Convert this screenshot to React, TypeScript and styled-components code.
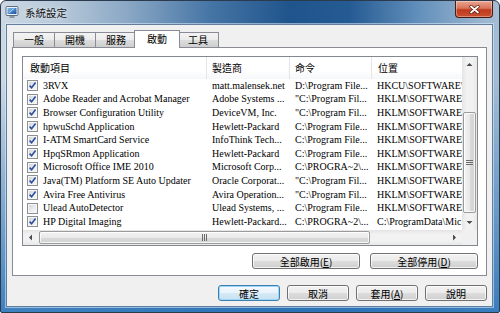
import React from "react";
import styled, { createGlobalStyle, css } from "styled-components";

const CJK = `"Noto Sans CJK TC", "Noto Sans CJK SC", sans-serif`;
const SERIF = `"Liberation Serif", "Noto Sans CJK TC", serif`;

const GlobalStyle = createGlobalStyle`
  * { box-sizing: border-box; }
  html, body { margin: 0; padding: 0; background: #fff; }
  body { width: 500px; height: 313px; overflow: hidden; font-family: ${SERIF}; }
`;

const Window = styled.div`
  width: 500px;
  height: 313px;
  display: flex;
  flex-direction: column;
  border: 1px solid #2b3b4d;
  border-radius: 6px 6px 2px 2px;
  overflow: hidden;
  background:
    linear-gradient(to bottom, rgba(46, 118, 186, 0) 0px, rgba(46, 118, 186, 0) 80px, rgba(46, 118, 186, 0.9) 313px),
    linear-gradient(to right, #ccd8e3 0%, #b6c8d9 12%, #88a6c4 26%, #4675a5 42%, #1f548c 58%, #255b93 70%, #6390bb 84%, #8faecb 94%, #a6bed5 100%);
`;

const TitleBar = styled.div`
  height: 23px;
  display: flex;
  align-items: flex-start;
  padding: 0 6px 0 4px;
`;

const AppIcon = styled.svg`
  margin-top: 4px;
  flex: none;
`;

const Title = styled.div`
  margin: 5px 0 0 6px;
  font: 10.5px/14px ${CJK};
  color: #111;
  text-shadow: 0 0 4px rgba(255, 255, 255, 0.9);
`;

const CloseButton = styled.div`
  margin-left: auto;
  width: 38px;
  height: 17px;
  display: flex;
  align-items: center;
  justify-content: center;
  border: 1px solid #4a1a10;
  border-top: none;
  border-radius: 0 0 4px 4px;
  background: linear-gradient(#e8a592 0%, #d87459 45%, #c13a1e 55%, #c9502f 100%);
  box-shadow: inset 0 0 0 1px rgba(255, 255, 255, 0.35);
`;

const Client = styled.div`
  flex: 1;
  margin: 0 6px 5px 5px;
  display: flex;
  flex-direction: column;
  padding: 5px;
  background: #f0f0f0;
  border: 1px solid #627e9c;
  box-shadow: 0 0 0 1px rgba(220, 240, 255, 0.55);
`;

const TabRow = styled.div`
  height: 17px;
  display: flex;
  align-items: flex-end;
  padding-left: 2px;
  position: relative;
  z-index: 1;
`;

const Tab = styled.div<{ $active?: boolean }>`
  height: 15px;
  padding: 0 10px;
  margin-left: -1px;
  border: 1px solid #898c95;
  border-bottom: none;
  background: linear-gradient(#f3f3f3 0%, #ebebeb 50%, #dddddd 50%, #cfcfcf 100%);
  font: 10px/14px ${CJK};
  color: #000;
  ${(p) =>
    p.$active &&
    css`
      height: 18px;
      margin: 0 -2px -1px -3px;
      padding: 1px 12px 0;
      background: #fff;
      position: relative;
      z-index: 2;
    `}
`;

const Panel = styled.div`
  height: 229px;
  display: flex;
  flex-direction: column;
  padding: 8px 8px 6px 9px;
  background: #fff;
  border: 1px solid #898c95;
`;

const ListBox = styled.div`
  height: 190px;
  display: grid;
  grid-template-columns: 1fr 15px;
  grid-template-rows: 1fr 15px;
  border: 1px solid #828790;
  background: #fff;
`;

const ListContent = styled.div`
  overflow: hidden;
`;

const COLS = "184px 83px 82px 140px";

const HeaderRow = styled.div`
  height: 22px;
  display: grid;
  grid-template-columns: ${COLS};
  background: linear-gradient(#ffffff 0%, #ffffff 60%, #f6f7f9 100%);
`;

const HeaderCell = styled.div<{ $pad?: number }>`
  display: flex;
  align-items: center;
  padding-left: ${(p) => p.$pad ?? 5}px;
  border-right: 1px solid #e3e5e8;
  font: 10px/12px ${CJK};
  color: #000;
  white-space: nowrap;
`;

const Row = styled.div`
  height: 13.6px;
  display: grid;
  grid-template-columns: ${COLS};
  align-items: center;
  font: 10px/12px ${SERIF};
  color: #000;
  white-space: nowrap;
`;

const Cell = styled.div`
  overflow: hidden;
  padding-left: 5px;
`;

const NameCell = styled.div`
  display: flex;
  align-items: center;
  gap: 5px;
  padding-left: 4px;
  overflow: hidden;
`;

const CheckBox = styled.span`
  flex: none;
  width: 11px;
  height: 11px;
  display: flex;
  align-items: center;
  justify-content: center;
  border: 1px solid #8e8f8f;
  background: linear-gradient(135deg, #cdd1d6 0%, #eceef0 60%, #f8f8f8 100%);
  box-shadow: inset 0 0 0 1px #f6f6f6;
`;

const VScroll = styled.div`
  display: flex;
  flex-direction: column;
  background: linear-gradient(to right, #e4e4e4 0%, #f2f2f2 30%, #f2f2f2 70%, #e8e8e8 100%);
`;

const HScroll = styled.div`
  display: flex;
  background: linear-gradient(#e4e4e4 0%, #f2f2f2 30%, #f2f2f2 70%, #e8e8e8 100%);
`;

const ArrowBox = styled.div`
  flex: none;
  width: 15px;
  height: 15px;
  display: flex;
  align-items: center;
  justify-content: center;
`;

const Track = styled.div<{ $vertical?: boolean; $offset: number }>`
  flex: 1;
  display: flex;
  flex-direction: ${(p) => (p.$vertical ? "column" : "row")};
  ${(p) => (p.$vertical ? `padding: ${p.$offset}px 1px 0;` : `padding: 1px 0 1px ${p.$offset}px;`)}
`;

const Thumb = styled.div<{ $vertical?: boolean; $size: number }>`
  ${(p) => (p.$vertical ? `height: ${p.$size}px;` : `width: ${p.$size}px;`)}
  display: flex;
  align-items: center;
  justify-content: center;
  border: 1px solid #9b9b9b;
  border-radius: 2px;
  background: ${(p) =>
    p.$vertical
      ? "linear-gradient(to right, #f4f4f4 0%, #e9e9e9 50%, #dadada 51%, #d2d2d2 100%)"
      : "linear-gradient(#f4f4f4 0%, #e9e9e9 50%, #dadada 51%, #d2d2d2 100%)"};
  box-shadow: inset 0 0 0 1px rgba(255, 255, 255, 0.8);
`;

const Corner = styled.div`
  background: #f0f0f0;
`;

const ActionRow = styled.div<{ $top: number; $gap: number }>`
  display: flex;
  justify-content: flex-end;
  gap: ${(p) => p.$gap}px;
  margin-top: ${(p) => p.$top}px;
`;

const Button = styled.button<{ $w: number; $default?: boolean }>`
  width: ${(p) => p.$w}px;
  height: 16px;
  padding: 0;
  border: 1px solid #707070;
  border-radius: 3px;
  background: linear-gradient(#f2f2f2 0%, #ebebeb 50%, #dddddd 50%, #cfcfcf 100%);
  box-shadow: inset 0 0 0 1px rgba(255, 255, 255, 0.75);
  font: 10px/13px ${CJK};
  color: #000;
  ${(p) =>
    p.$default &&
    css`
      border-color: #3c7fb1;
      background: linear-gradient(#f4f9fd 0%, #e8f3fb 50%, #d6eaf7 50%, #c7e1f3 100%);
      box-shadow: inset 0 0 0 1px #9fd8f5;
    `}
  u {
    text-decoration: underline;
  }
`;

type Item = [boolean, string, string, string, string];

const items: Item[] = [
  [true, "3RVX", "matt.malensek.net", "D:\\Program File...", "HKCU\\SOFTWARE\\"],
  [true, "Adobe Reader and Acrobat Manager", "Adobe Systems ...", "\"C:\\Program Fil...", "HKLM\\SOFTWARE\\"],
  [true, "Browser Configuration Utility", "DeviceVM, Inc.", "\"C:\\Program Fil...", "HKLM\\SOFTWARE\\"],
  [true, "hpwuSchd Application", "Hewlett-Packard", "C:\\Program File...", "HKLM\\SOFTWARE\\"],
  [true, "I-ATM SmartCard Service", "InfoThink Tech...", "C:\\Program File...", "HKLM\\SOFTWARE\\"],
  [true, "HpqSRmon Application", "Hewlett-Packard", "C:\\Program File...", "HKLM\\SOFTWARE\\"],
  [true, "Microsoft Office IME 2010", "Microsoft Corp...", "C:\\PROGRA~2\\...", "HKLM\\SOFTWARE\\"],
  [true, "Java(TM) Platform SE Auto Updater", "Oracle Corporat...", "\"C:\\Program Fil...", "HKLM\\SOFTWARE\\"],
  [true, "Avira Free Antivirus", "Avira Operation...", "\"C:\\Program Fil...", "HKLM\\SOFTWARE\\"],
  [false, "Ulead AutoDetector", "Ulead Systems, ...", "C:\\Program File...", "HKLM\\SOFTWARE\\"],
  [true, "HP Digital Imaging", "Hewlett-Packard...", "C:\\PROGRA~2\\...", "C:\\ProgramData\\Mic"],
];

const Arrow = ({ dir }: { dir: "up" | "down" | "left" | "right" }) => {
  const pts = {
    up: "0.5,4 3.5,1 6.5,4",
    down: "0.5,1 3.5,4 6.5,1",
    left: "4,0.5 1,3.5 4,6.5",
    right: "1,0.5 4,3.5 1,6.5",
  }[dir];
  const w = dir === "up" || dir === "down" ? 7 : 5;
  const h = dir === "up" || dir === "down" ? 5 : 7;
  return (
    <svg width={w} height={h} viewBox={`0 0 ${w} ${h}`}>
      <polygon points={pts} fill="#4a4a4a" />
    </svg>
  );
};

const Grip = ({ vertical }: { vertical?: boolean }) => (
  <svg width={vertical ? 7 : 5} height={vertical ? 5 : 7}>
    {[0, 2, 4].map((o) =>
      vertical ? (
        <line key={o} x1="0" x2="7" y1={o + 0.5} y2={o + 0.5} stroke="#6a6a6a" />
      ) : (
        <line key={o} y1="0" y2="7" x1={o + 0.5} x2={o + 0.5} stroke="#6a6a6a" />
      )
    )}
  </svg>
);

const App = () => {
  return (
    <>
      <GlobalStyle />
      <Window>
        <TitleBar>
          <AppIcon width="14" height="14" viewBox="0 0 14 14">
            <defs>
              <linearGradient id="scr" x1="0" y1="0" x2="1" y2="1">
                <stop offset="0" stopColor="#7cc0f4" />
                <stop offset="1" stopColor="#1b4f9f" />
              </linearGradient>
            </defs>
            <rect x="1" y="1.5" width="12" height="9" rx="1" fill="#eef2f6" stroke="#5c6f85" />
            <rect x="2.5" y="3" width="9" height="6" fill="url(#scr)" />
            <path d="M3.5 8 L9 3.5" stroke="#d8ecfb" strokeWidth="0.8" />
            <rect x="4.5" y="11" width="5" height="2" fill="#8a97a6" />
          </AppIcon>
          <Title>系統設定</Title>
          <CloseButton>
            <svg width="11" height="9" viewBox="0 0 11 9">
              <path d="M2 1.5 L9 7.5 M9 1.5 L2 7.5" stroke="#5a1a0e" strokeWidth="3.2" strokeLinecap="round" />
              <path d="M2 1.5 L9 7.5 M9 1.5 L2 7.5" stroke="#ffffff" strokeWidth="1.8" strokeLinecap="round" />
            </svg>
          </CloseButton>
        </TitleBar>
        <Client>
          <TabRow>
            <Tab>一般</Tab>
            <Tab>開機</Tab>
            <Tab>服務</Tab>
            <Tab $active>啟動</Tab>
            <Tab>工具</Tab>
          </TabRow>
          <Panel>
            <ListBox>
              <ListContent>
                <HeaderRow>
                  <HeaderCell $pad={7}>啟動項目</HeaderCell>
                  <HeaderCell>製造商</HeaderCell>
                  <HeaderCell>命令</HeaderCell>
                  <HeaderCell $pad={6}>位置</HeaderCell>
                </HeaderRow>
                {items.map(([on, name, maker, cmd, loc]) => (
                  <Row key={name}>
                    <NameCell>
                      <CheckBox>
                        {on && (
                          <svg width="9" height="9" viewBox="0 0 9 9">
                            <path d="M1.6 4.6 L3.6 6.8 L7.6 1.6" fill="none" stroke="#2d4f9e" strokeWidth="1.6" />
                          </svg>
                        )}
                      </CheckBox>
                      <span>{name}</span>
                    </NameCell>
                    <Cell>{maker}</Cell>
                    <Cell>{cmd}</Cell>
                    <Cell>{loc}</Cell>
                  </Row>
                ))}
              </ListContent>
              <VScroll>
                <ArrowBox>
                  <Arrow dir="up" />
                </ArrowBox>
                <Track $vertical $offset={40}>
                  <Thumb $vertical $size={101}>
                    <Grip vertical />
                  </Thumb>
                </Track>
                <ArrowBox>
                  <Arrow dir="down" />
                </ArrowBox>
              </VScroll>
              <HScroll>
                <ArrowBox>
                  <Arrow dir="left" />
                </ArrowBox>
                <Track $offset={1}>
                  <Thumb $size={331}>
                    <Grip />
                  </Thumb>
                </Track>
                <ArrowBox>
                  <Arrow dir="right" />
                </ArrowBox>
              </HScroll>
              <Corner />
            </ListBox>
            <ActionRow $top={7} $gap={10}>
              <Button $w={108}>
                全部啟用(<u>E</u>)
              </Button>
              <Button $w={108}>
                全部停用(<u>D</u>)
              </Button>
            </ActionRow>
          </Panel>
          <ActionRow $top={9} $gap={7}>
            <Button $w={62} $default>
              確定
            </Button>
            <Button $w={62}>取消</Button>
            <Button $w={62}>
              套用(<u>A</u>)
            </Button>
            <Button $w={62}>說明</Button>
          </ActionRow>
        </Client>
      </Window>
    </>
  );
};

export default App;
